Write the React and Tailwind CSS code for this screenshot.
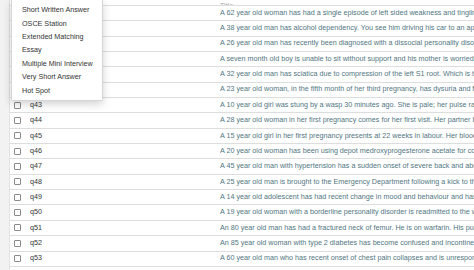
import React from 'react';

const questions = [
    ['q37', 'A 62 year old woman has had a single episode of left sided weakness and tingling in her left arm and leg'],
    ['q38', 'A 38 year old man has alcohol dependency. You see him driving his car to an appointment'],
    ['q39', 'A 26 year old man has recently been diagnosed with a dissocial personality disorder'],
    ['q40', 'A seven month old boy is unable to sit without support and his mother is worried about him'],
    ['q41', 'A 32 year old man has sciatica due to compression of the left S1 root. Which is the most likely finding'],
    ['q42', 'A 23 year old woman, in the fifth month of her third pregnancy, has dysuria and frequency'],
    ['q43', 'A 10 year old girl was stung by a wasp 30 minutes ago. She is pale; her pulse rate is 120 bpm'],
    ['q44', 'A 28 year old woman in her first pregnancy comes for her first visit. Her partner has a brother'],
    ['q45', 'A 15 year old girl in her first pregnancy presents at 22 weeks in labour. Her blood pressure'],
    ['q46', 'A 20 year old woman has been using depot medroxyprogesterone acetate for contraception'],
    ['q47', 'A 45 year old man with hypertension has a sudden onset of severe back and abdominal pain'],
    ['q48', 'A 25 year old man is brought to the Emergency Department following a kick to the abdomen'],
    ['q49', 'A 14 year old adolescent has had recent change in mood and behaviour and has been absent'],
    ['q50', 'A 19 year old woman with a borderline personality disorder is readmitted to the ward'],
    ['q51', 'An 80 year old man has had a fractured neck of femur. He is on warfarin. His pulse rate'],
    ['q52', 'An 85 year old woman with type 2 diabetes has become confused and incontinent of urine'],
    ['q53', 'A 60 year old man who has recent onset of chest pain collapses and is unresponsive'],
];

const types = [
    'Short Written Answer',
    'OSCE Station',
    'Extended Matching',
    'Essay',
    'Multiple Mini Interview',
    'Very Short Answer',
    'Hot Spot',
];

const App = () => {
    return (
        <div className="flex w-[474px] h-[270px] overflow-hidden bg-white text-[7.2px] text-[#333] antialiased" style={{ fontFamily: '"Liberation Sans", Arial, sans-serif' }}>
            {/* left gutter */}
            <div className="w-[10px] shrink-0 bg-[#f2f2f2] border-r border-[#e2e2e2]"></div>

            <div className="relative flex-1 min-w-0">
                {/* header (scrolled mostly out of view) */}
                <div className="h-[6px] overflow-hidden flex items-end border-b border-[#ddd]">
                    <div className="w-[210px] shrink-0"></div>
                    <span className="leading-[12px] translate-y-[7px] text-[#aaa]">Title</span>
                </div>

                {questions.map(([id, text]) => (
                    <div key={id} className="h-[15.35px] flex items-center border-b border-[#ddd] whitespace-nowrap">
                        <div className="w-[20px] shrink-0 flex pl-[4px]">
                            <span className="w-[7px] h-[7px] border border-[#8a8a8a] rounded-[1px] bg-white"></span>
                        </div>
                        <div className="w-[190px] shrink-0">{id}</div>
                        <div className="text-[#51767f] overflow-hidden">{text}</div>
                    </div>
                ))}

                {/* question type dropdown */}
                <div className="absolute left-[1px] top-0 w-[92px] bg-white border border-t-0 border-[#d6d6d6] rounded-b-[2px] shadow-[0_3px_8px_rgba(0,0,0,0.18)] pt-[4px] pb-[2px]">
                    {types.map((t) => (
                        <div key={t} className="h-[13.4px] flex items-center pl-[10px] whitespace-nowrap text-[#333]">{t}</div>
                    ))}
                </div>
            </div>
        </div>
    );
};

export default App;
